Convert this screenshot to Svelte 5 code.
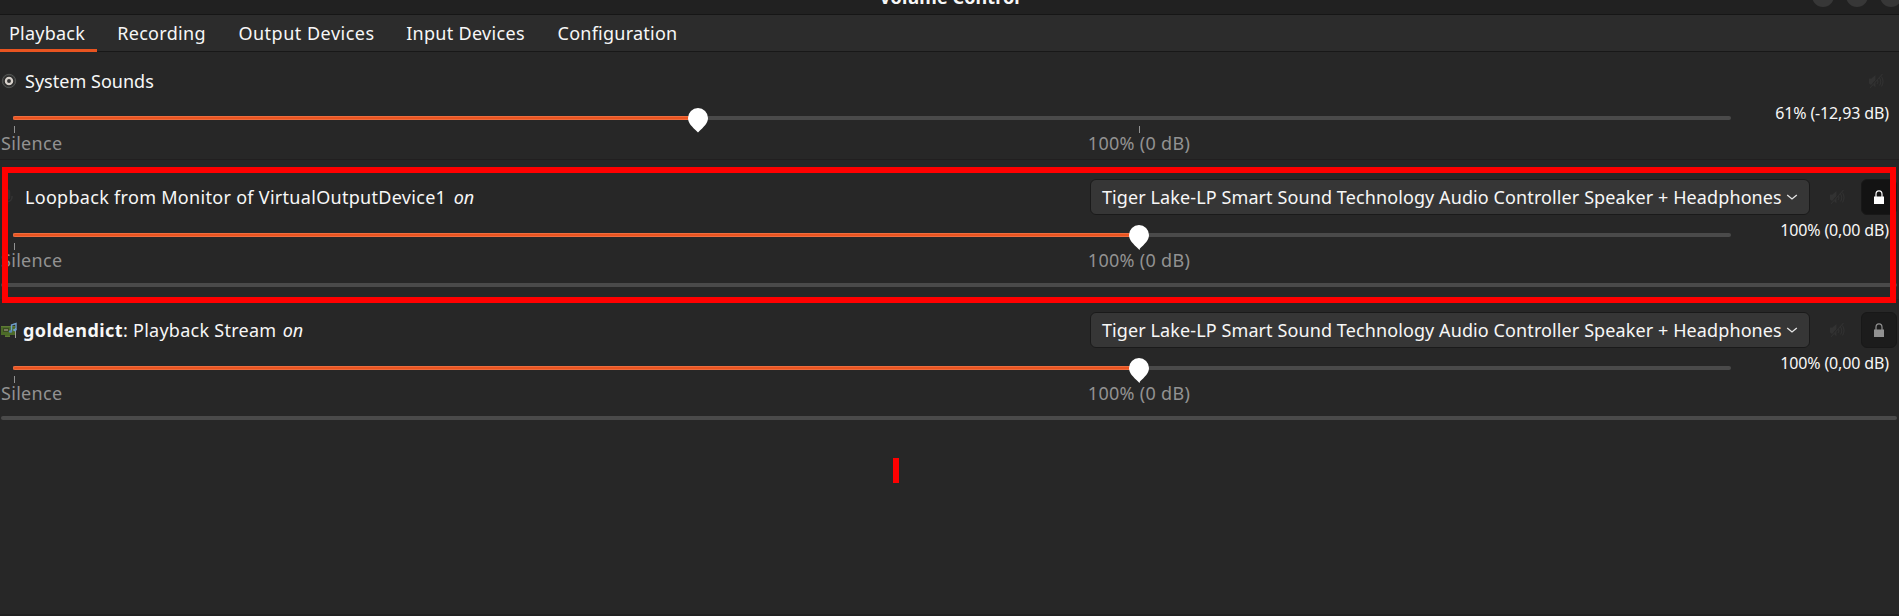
<script>
  const device = 'Tiger Lake-LP Smart Sound Technology Audio Controller Speaker + Headphones';
  const tabs = [
    { name: 'Playback', width: 97, spacing: 0.25 },
    { name: 'Recording', width: 129, spacing: 0.3 },
    { name: 'Output Devices', width: 161, spacing: 0.5 },
    { name: 'Input Devices', width: 157, spacing: 0.3 },
    { name: 'Configuration', width: 147, spacing: 0.25 }
  ];
  const streams = [
    { kind: 'system', title: 'System Sounds', spacing: 0.02, level: 39.9, value: '61% (-12,93 dB)' },
    { kind: 'mic', title: 'Loopback from Monitor of VirtualOutputDevice1', spacing: 0.3, level: 65.54, value: '100% (0,00 dB)', locked: true },
    { kind: 'card', app: 'goldendict', title: ': Playback Stream', spacing: 0.26, level: 65.54, value: '100% (0,00 dB)', locked: false }
  ];
</script>

<main class="window">
  <header class="titlebar">
    <span class="title">Volume Control</span>
    <div class="controls"><i></i><i></i><i></i></div>
  </header>

  <nav class="tabs">
    {#each tabs as tab, i}
      <span class="tab" class:active={i === 0} style="width:{tab.width}px;letter-spacing:{tab.spacing}px">{tab.name}</span>
    {/each}
  </nav>

  {#each streams as s}
    <section class="stream {s.kind}">
      <div class="head">
        <div class="icon">
          {#if s.kind === 'system'}
            <svg width="16" height="16" viewBox="0 0 16 16">
              <circle cx="8" cy="8" r="6.7" fill="#3a3b3a" stroke="#525452" />
              <circle cx="8" cy="8" r="5.2" fill="#252525" />
              <circle cx="8" cy="8" r="3.1" fill="#333" stroke="#d6d0ca" stroke-width="2.3" />
            </svg>
          {:else if s.kind === 'mic'}
            <svg width="16" height="16" viewBox="0 0 16 16" fill="none" stroke="#343434" stroke-width="1.5">
              <rect x="5.5" y="1" width="4" height="9" rx="2" fill="#343434" />
              <path d="M3 7v1a4.5 4.5 0 0 0 9 0V7M7.5 12v3" />
            </svg>
          {:else}
            <svg width="16" height="16" viewBox="0 0 16 16">
              <path d="M0 4h14v9H9v2H4v-2H0z" fill="#4c6b28" />
              <path d="M0 4h14v1H0zM4 14h5v1H4z" fill="#5f7a35" />
              <rect x="2.5" y="6.5" width="5" height="3" fill="#79795e" stroke="#3a4a22" />
              <path d="M14.5 6v10" stroke="#9b9d99" />
              <path d="M10.500 9V3l4.500-1.500V8" fill="none" stroke="#6f9fca" stroke-width="1.400" />
              <ellipse cx="9.500" cy="9.500" rx="1.700" ry="1.300" fill="#5886b5" />
              <ellipse cx="13.800" cy="8" rx="1.700" ry="1.300" fill="#6f9fca" />
            </svg>
          {/if}
        </div>
        <div class="name" style="letter-spacing:{s.spacing}px">{#if s.app}<b>{s.app}</b>{/if}{s.title}{#if s.kind !== 'system'}<em>on</em>{/if}</div>
        {#if s.kind !== 'system'}
          <div class="combo">
            <span>{device}</span>
            <svg width="12" height="8" viewBox="0 0 12 8"><path d="M1.2 1.900 6 6l4.800-4.100" fill="none" stroke="#e5e5e5" stroke-width="1.3" /></svg>
          </div>
        {/if}
        <div class="mute">
          <svg width="16" height="16" viewBox="0 0 16 16">
            <path d="M1 5.500h2.500L7.500 2v5L3 12 1 10.500zM7.500 9v5.500L5 12z" fill="#353535" />
            <path d="M9.500 7q1 2-.5 4M11.500 5q2.500 3.500 0 7.500M13.500 3.500q3 5 0 10M2 15 14.500 1" fill="none" stroke="#353535" stroke-width="1.1" />
          </svg>
        </div>
        {#if s.kind !== 'system'}
          <div class="lock" class:on={s.locked}>
            <svg width="10" height="14" viewBox="0 0 10 14">
              <path d="M2 7V4.200a3 3.400 0 0 1 6 0V7" fill="none" stroke="currentColor" stroke-width="1.2" />
              <path d="M0 6.500h10V14H0z" fill="currentColor" />
            </svg>
          </div>
        {/if}
      </div>

      <div class="body">
        <div class="scale">
          <div class="track">
            <div class="fill" style="width:{s.level}%"></div>
            <i class="tick start"></i>
            <i class="tick full"></i>
            <svg class="handle" style="left:{s.level}%" width="20" height="25" viewBox="0 0 20 25">
              <path d="M10 0a10 10 0 0 1 10 10c0 5-3.800 8.500-10 14.500C3.800 18.500 0 15 0 10A10 10 0 0 1 10 0z" fill="#fff" />
            </svg>
            <span class="label full">100% (0 dB)</span>
          </div>
          <div class="label silence">Silence</div>
        </div>
        <div class="value">{s.value}</div>
      </div>
      {#if s.kind !== 'system'}<div class="meter"></div>{/if}
    </section>
  {/each}

  <div class="highlight"></div>
  <div class="mark"></div>
</main>

<style>
  :global(body) { background: #272727; }
  .window {
    position: relative; box-sizing: border-box; width: 1899px; height: 616px; overflow: hidden;
    background: #272727; border-bottom: 2px solid #212121; color: #f7f7f7;
    font: 18px/24px "Noto Sans", sans-serif;
  }
  .titlebar {
    position: relative; box-sizing: border-box; height: 15px; overflow: hidden;
    display: flex; justify-content: center; background: #212121; border-bottom: 1px solid #161616;
  }
  .title { font-weight: 700; margin: -15px 0 0; letter-spacing: .1px; white-space: nowrap; }
  .controls { position: absolute; right: -3px; top: -15px; display: flex; gap: 12px; }
  .controls i { width: 22px; height: 22px; border-radius: 50%; background: #373737; }
  .tabs { box-sizing: border-box; height: 37px; display: flex; background: #2c2c2c; border-bottom: 1px solid #181818; }
  .tab { box-sizing: border-box; height: 37px; line-height: 36px; text-align: center; white-space: nowrap; }
  .tab:first-child { padding-right: 3px; }
  .tab.active { border-bottom: 3px solid #e95420; }

  .stream { box-sizing: border-box; height: 133px; padding-top: 12px; border-bottom: 1px solid #232323; }
  .stream.system { height: 108px; padding-top: 11px; margin-bottom: 7px; border-bottom-color: #211f20; }
  .stream.card { border-bottom-color: transparent; }
  .head { display: flex; align-items: center; height: 36px; padding-right: 2px; }
  .system .head { height: 35px; }
  .icon { width: 25px; padding-left: 1px; box-sizing: border-box; flex: none; display: flex; }
  .mic .icon { padding-left: 0; }
  .card .icon { width: 23px; }
  .name { flex: 1; white-space: nowrap; }
  .name b { letter-spacing: .43px; }
  .name em { margin-left: 7.5px; letter-spacing: -.2px; }
  .card .name em { margin-left: 6.5px; }
  .combo {
    box-sizing: border-box; width: 720px; height: 36px; border: 1px solid #1a1a1a; border-radius: 6px;
    background: #363636; display: flex; align-items: center; padding-left: 11px; gap: 4px; white-space: nowrap;
    letter-spacing: .1px;
  }
  .mute { box-sizing: border-box; width: 51px; padding-left: 19px; display: flex; opacity: .8; }
  .system .mute { width: 29px; padding-left: 0; }
  .lock {
    box-sizing: border-box; width: 36px; height: 36px; border: 1px solid #181818; border-radius: 6px;
    background: #1c1c1c; color: #929292; display: flex; align-items: center; justify-content: center;
  }
  .lock.on { background: #131313; color: #fff; }

  .body { display: flex; height: 68px; }
  .scale { box-sizing: border-box; width: 1744px; padding: 18px 13px 0; }
  .track { position: relative; height: 4px; border-radius: 2px; background: #4a4a4a; }
  .fill { box-sizing: border-box; height: 4px; border-radius: 2px 0 0 2px; background: #e95420; border: solid #ef6c3e; border-width: 1px 0 1px 1px; }
  .tick { position: absolute; top: 10px; width: 1px; height: 7px; background: #929292; }
  .tick.start { left: 1px; }
  .tick.full { left: 65.54%; }
  .handle { position: absolute; top: -8px; margin-left: -10px; }
  .label { color: #929292; letter-spacing: .3px; white-space: nowrap; }
  .label.full { position: absolute; left: 65.54%; top: 15px; transform: translateX(-50%); }
  .silence { margin: 11px 0 0 -12px; }
  .value { box-sizing: border-box; flex: 1; padding: 3px 10px 0 0; text-align: right; font-size: 16px; letter-spacing: -.13px; white-space: nowrap; }
  .meter { height: 4px; margin: 0 2px 0 1px; border-radius: 2px; background: #4a4a4a; }

  /* Annotations drawn over the window */
  .highlight { position: absolute; left: 2px; top: 167px; width: 1894px; height: 136px; box-sizing: border-box; border: 6px solid #f00; }
  .mark { position: absolute; left: 893px; top: 458px; width: 6px; height: 25px; background: #f00; }
</style>
